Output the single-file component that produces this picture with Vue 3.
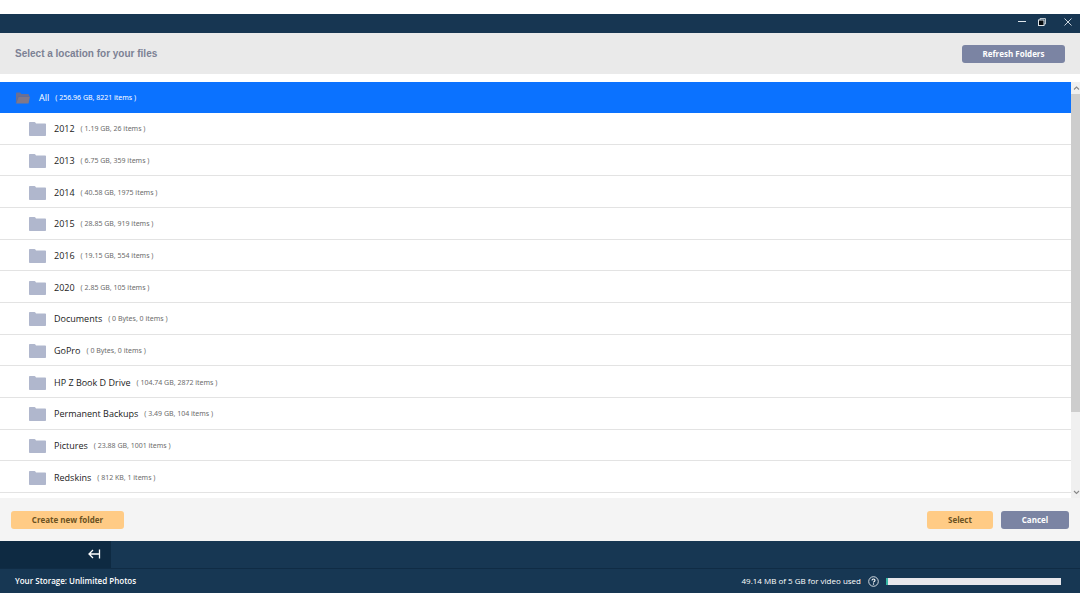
<script setup>
const folders = [
  { name: '2012', info: '( 1.19 GB, 26 items )' },
  { name: '2013', info: '( 6.75 GB, 359 items )' },
  { name: '2014', info: '( 40.58 GB, 1975 items )' },
  { name: '2015', info: '( 28.85 GB, 919 items )' },
  { name: '2016', info: '( 19.15 GB, 554 items )' },
  { name: '2020', info: '( 2.85 GB, 105 items )' },
  { name: 'Documents', info: '( 0 Bytes, 0 items )' },
  { name: 'GoPro', info: '( 0 Bytes, 0 items )' },
  { name: 'HP Z Book D Drive', info: '( 104.74 GB, 2872 items )' },
  { name: 'Permanent Backups', info: '( 3.49 GB, 104 items )' },
  { name: 'Pictures', info: '( 23.88 GB, 1001 items )' },
  { name: 'Redskins', info: '( 812 KB, 1 items )' },
]
const used = 49.14
const quota = 5120
</script>

<template>
  <div class="app">
    <div class="titlebar">
      <button type="button" aria-label="Minimize">
        <svg width="8" height="8" viewBox="0 0 8 8"><path d="M0 3.500h8" fill="none" stroke="#dfe6ec" /></svg>
      </button>
      <button type="button" aria-label="Restore">
        <svg width="8" height="8" viewBox="0 0 8 8">
          <path d="M2 2V.5h5.500V6H6" fill="none" stroke="#b9c4cc" />
          <rect x=".5" y="2" width="5.500" height="5.500" fill="#050a0e" stroke="#dfe6ec" />
        </svg>
      </button>
      <button type="button" aria-label="Close">
        <svg width="8" height="8" viewBox="0 0 8 8"><path d="M.5.5l7 7M7.500.5l-7 7" fill="none" stroke="#dfe6ec" stroke-width=".9" /></svg>
      </button>
    </div>

    <header class="header">
      <h1>Select a location for your files</h1>
      <button type="button" class="btn slate refresh">Refresh Folders</button>
    </header>

    <main class="browser">
      <div class="list">
        <button type="button" class="root">
          <svg width="16" height="12" viewBox="0 0 16 12">
            <path d="M1 11V1.500Q1 .5 2 .5h3l1.500 1.500H13q1 0 1 1V5" fill="#6b6f92" />
            <path d="M1 11.500 3.500 4.500H15L13.500 11.500Z" fill="#80788a" />
            <path d="M1 11 3.300 4.500H15" fill="none" stroke="#596b9f" stroke-width=".7" />
          </svg>
          <span class="name">All</span>
          <span class="info">( 256.96 GB, 8221 items )</span>
        </button>
        <ul>
          <li v-for="f in folders" :key="f.name">
            <button type="button" class="row">
              <svg width="17" height="14" viewBox="0 0 17 14">
                <path d="M0 .8Q0 0 .8 0H5.500q.6 0 .9.5L7 1.500H16.200q.8 0 .8.800V13.200q0 .8-.8.800H.8Q0 14 0 13.200Z" fill="#b0b7cd" />
              </svg>
              <span class="name">{{ f.name }}</span>
              <span class="info">{{ f.info }}</span>
            </button>
          </li>
        </ul>
      </div>
      <div class="scroll" aria-hidden="true">
        <svg width="9" height="12" viewBox="0 0 9 12"><path d="M3 7.500 5.500 5 8 7.500" fill="none" stroke="#888" stroke-width="1.100" /></svg>
        <div class="track"><div class="thumb"></div></div>
        <svg width="9" height="12" viewBox="0 0 9 12"><path d="M3 5 5.500 7.500 8 5" fill="none" stroke="#888" stroke-width="1.100" /></svg>
      </div>
    </main>

    <footer class="actions">
      <button type="button" class="btn amber create">Create new folder</button>
      <button type="button" class="btn amber select">Select</button>
      <button type="button" class="btn slate cancel">Cancel</button>
    </footer>

    <div class="dock">
      <button type="button" class="collapse" aria-label="Collapse sidebar">
        <svg width="13" height="10" viewBox="0 0 13 10">
          <path d="M1 5h10M5 1 1 5l4 4M11.500.5v9" fill="none" stroke="#fff" stroke-width="1.300" />
        </svg>
      </button>
    </div>

    <div class="status">
      <strong>Your Storage: Unlimited Photos</strong>
      <span class="usage">49.14 MB of 5 GB for video used</span>
      <button type="button" class="help" aria-label="Storage help">
        <svg width="11" height="11" viewBox="0 0 11 11">
          <circle cx="5.500" cy="5.500" r="4.800" fill="none" stroke="#e6ecf1" stroke-width=".9" />
          <path d="M4 4.400Q4 3 5.500 3T7 4.300Q7 5 6.200 5.400T5.500 6.500" fill="none" stroke="#fff" stroke-width="1.100" />
          <circle cx="5.500" cy="8" r=".7" fill="#fff" />
        </svg>
      </button>
      <div class="meter" role="progressbar" aria-label="Video storage used" :aria-valuenow="used" :aria-valuemax="quota">
        <div class="fill" :style="{ width: (used / quota) * 100 + '%' }"></div>
      </div>
    </div>
  </div>
</template>

<style>
body {
  margin: 0;
  background: #fff;
}
</style>

<style scoped>
.app {
  box-sizing: border-box;
  display: flex;
  flex-direction: column;
  min-height: 100vh;
  padding: 14px 0;
  font-family: "Open Sans", "Noto Sans", sans-serif;
  font-size: 9px;
  line-height: 14px;
  color: #222;
}
button {
  margin: 0;
  padding: 0;
  border: 0;
  background: none;
  color: inherit;
  font: inherit;
  cursor: pointer;
}
svg {
  display: block;
  flex: none;
}
.titlebar {
  display: flex;
  justify-content: flex-end;
  gap: 12px;
  height: 19px;
  padding-right: 8px;
  background: #173652;
}
.titlebar button {
  height: 16px;
}
.titlebar button:last-child {
  margin-left: 6px;
}
.header {
  display: flex;
  align-items: center;
  justify-content: space-between;
  height: 41px;
  padding: 0 15px;
  background: #eaeaea;
}
h1 {
  margin: 0;
  font: bold 10px/14px "Liberation Sans", sans-serif;
  color: #7c8194;
}
.btn {
  height: 18px;
  border-radius: 3px;
  font-size: 8px;
  font-weight: 700;
  line-height: 18px;
}
.slate {
  background: #7b84a3;
  color: #fff;
}
.amber {
  background: #ffcb85;
  color: #6b5222;
}
.refresh {
  width: 103px;
}
.browser {
  display: flex;
  flex: 1;
  padding-top: 8px;
}
.list {
  display: flex;
  flex: 1;
  flex-direction: column;
  padding-bottom: 5px;
}
.root {
  display: flex;
  align-items: center;
  height: 31px;
  padding-left: 15px;
  background: #0b72ff;
  color: #fff;
}
ul {
  display: grid;
  flex: 1;
  grid-auto-rows: 1fr;
  margin: 0;
  padding: 0;
  list-style: none;
}
li {
  display: flex;
  border-bottom: 1px solid #e3e3e3;
}
.row {
  display: flex;
  flex: 1;
  align-items: center;
  min-height: 30px;
  padding: 2px 0 0 29px;
}
.name {
  margin-left: 8px;
}
.info {
  margin-left: 6px;
  font-family: "Noto Sans", sans-serif;
  font-size: 7px;
  color: #6c6c6c;
}
.root .info {
  color: #fff;
}
.scroll {
  display: flex;
  flex-direction: column;
  width: 9px;
  background: #f0f0f0;
}
.track {
  flex: 1;
}
.thumb {
  height: 81%;
  min-height: 317px;
  background: #cdcdcd;
}
.actions {
  display: flex;
  align-items: center;
  gap: 8px;
  height: 43px;
  padding: 0 11px;
  background: #f4f4f4;
}
.create {
  width: 113px;
  margin-right: auto;
}
.select {
  width: 66px;
}
.cancel {
  width: 68px;
}
.dock {
  display: flex;
  height: 27px;
  background: #173753;
}
.collapse {
  display: flex;
  align-items: center;
  justify-content: flex-end;
  width: 111px;
  padding: 0 10px 2px 0;
  box-sizing: border-box;
  background: #0e2a42;
}
.status {
  display: flex;
  align-items: center;
  height: 25px;
  box-sizing: border-box;
  padding: 0 19px 0 15px;
  border-top: 1px solid #102c45;
  background: #173753;
  color: #fff;
  font-size: 8px;
}
.status strong {
  margin-right: auto;
  font-weight: 600;
}
.help {
  margin: 0 7px;
}
.meter {
  width: 175px;
  height: 7px;
  background: #e8e8ec;
}
.fill {
  height: 100%;
  background: #35b7a5;
}
</style>
